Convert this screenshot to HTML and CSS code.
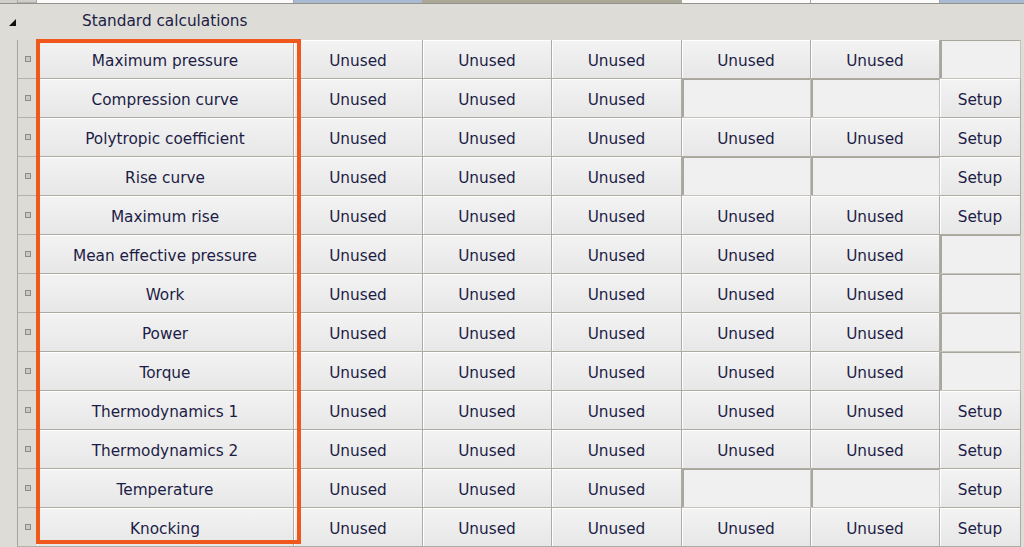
FILE: index.html
```html
<!DOCTYPE html>
<html>
<head>
    <meta charset="utf-8">
    <title>Standard calculations</title>
    <link rel="stylesheet" href="styles.css">
</head>
<body>
    <div class="grid">
        <div class="prev">
            <div class="p lead"></div>
            <div class="p gut"></div>
            <div class="p white name"></div>
            <div class="p blue c"></div>
            <div class="p tan c2"></div>
            <div class="p white c"></div>
            <div class="p white c"></div>
            <div class="p blue rest"></div>
        </div>

        <div class="group">
            <svg class="tri" width="7" height="7" viewBox="0 0 7 7"><polygon points="7,0 7,7 0,7" fill="#111"/></svg>
            <span>Standard calculations</span>
        </div>

        <div class="row">
            <div class="lead"></div><div class="gut"><i></i></div>
            <div class="cell name">Maximum pressure</div>
            <div class="cell c">Unused</div><div class="cell c">Unused</div><div class="cell c3">Unused</div>
            <div class="cell c">Unused</div><div class="cell c">Unused</div>
            <div class="empty s"></div>
        </div>
        <div class="row">
            <div class="lead"></div><div class="gut"><i></i></div>
            <div class="cell name">Compression curve</div>
            <div class="cell c">Unused</div><div class="cell c">Unused</div><div class="cell c3">Unused</div>
            <div class="empty c"></div><div class="empty c"></div>
            <div class="cell s">Setup</div>
        </div>
        <div class="row">
            <div class="lead"></div><div class="gut"><i></i></div>
            <div class="cell name">Polytropic coefficient</div>
            <div class="cell c">Unused</div><div class="cell c">Unused</div><div class="cell c3">Unused</div>
            <div class="cell c">Unused</div><div class="cell c">Unused</div>
            <div class="cell s">Setup</div>
        </div>
        <div class="row">
            <div class="lead"></div><div class="gut"><i></i></div>
            <div class="cell name">Rise curve</div>
            <div class="cell c">Unused</div><div class="cell c">Unused</div><div class="cell c3">Unused</div>
            <div class="empty c"></div><div class="empty c"></div>
            <div class="cell s">Setup</div>
        </div>
        <div class="row">
            <div class="lead"></div><div class="gut"><i></i></div>
            <div class="cell name">Maximum rise</div>
            <div class="cell c">Unused</div><div class="cell c">Unused</div><div class="cell c3">Unused</div>
            <div class="cell c">Unused</div><div class="cell c">Unused</div>
            <div class="cell s">Setup</div>
        </div>
        <div class="row">
            <div class="lead"></div><div class="gut"><i></i></div>
            <div class="cell name">Mean effective pressure</div>
            <div class="cell c">Unused</div><div class="cell c">Unused</div><div class="cell c3">Unused</div>
            <div class="cell c">Unused</div><div class="cell c">Unused</div>
            <div class="empty s"></div>
        </div>
        <div class="row">
            <div class="lead"></div><div class="gut"><i></i></div>
            <div class="cell name">Work</div>
            <div class="cell c">Unused</div><div class="cell c">Unused</div><div class="cell c3">Unused</div>
            <div class="cell c">Unused</div><div class="cell c">Unused</div>
            <div class="empty s"></div>
        </div>
        <div class="row">
            <div class="lead"></div><div class="gut"><i></i></div>
            <div class="cell name">Power</div>
            <div class="cell c">Unused</div><div class="cell c">Unused</div><div class="cell c3">Unused</div>
            <div class="cell c">Unused</div><div class="cell c">Unused</div>
            <div class="empty s"></div>
        </div>
        <div class="row">
            <div class="lead"></div><div class="gut"><i></i></div>
            <div class="cell name">Torque</div>
            <div class="cell c">Unused</div><div class="cell c">Unused</div><div class="cell c3">Unused</div>
            <div class="cell c">Unused</div><div class="cell c">Unused</div>
            <div class="empty s"></div>
        </div>
        <div class="row">
            <div class="lead"></div><div class="gut"><i></i></div>
            <div class="cell name">Thermodynamics 1</div>
            <div class="cell c">Unused</div><div class="cell c">Unused</div><div class="cell c3">Unused</div>
            <div class="cell c">Unused</div><div class="cell c">Unused</div>
            <div class="cell s">Setup</div>
        </div>
        <div class="row">
            <div class="lead"></div><div class="gut"><i></i></div>
            <div class="cell name">Thermodynamics 2</div>
            <div class="cell c">Unused</div><div class="cell c">Unused</div><div class="cell c3">Unused</div>
            <div class="cell c">Unused</div><div class="cell c">Unused</div>
            <div class="cell s">Setup</div>
        </div>
        <div class="row">
            <div class="lead"></div><div class="gut"><i></i></div>
            <div class="cell name">Temperature</div>
            <div class="cell c">Unused</div><div class="cell c">Unused</div><div class="cell c3">Unused</div>
            <div class="empty c"></div><div class="empty c"></div>
            <div class="cell s">Setup</div>
        </div>
        <div class="row">
            <div class="lead"></div><div class="gut"><i></i></div>
            <div class="cell name">Knocking</div>
            <div class="cell c">Unused</div><div class="cell c">Unused</div><div class="cell c3">Unused</div>
            <div class="cell c">Unused</div><div class="cell c">Unused</div>
            <div class="cell s">Setup</div>
        </div>

        <div class="highlight"></div>
    </div>
</body>
</html>
```

FILE: styles.css
```css
html, body {
    margin: 0;
    padding: 0;
    background: #dddcd6;
    font-family: "DejaVu Sans", Verdana, sans-serif;
    font-size: 15.3px;
    color: #1c1c46;
}

.grid {
    position: relative;
    width: 1024px;
    height: 547px;
    overflow: hidden;
}

/* bottom edge of the row above */
.prev {
    display: flex;
    height: 3px;
    border-bottom: 1px solid #93928b;
}

.prev .p {
    border-right: 1px solid #a9a8a1;
    box-sizing: border-box;
}

.prev .lead { width: 18px; background: #cfcec8; }
.prev .gut { width: 19px; background: #cfcec8; }
.prev .name { width: 257px; }
.prev .c { width: 129px; }
.prev .c2 { width: 259px; }
.prev .rest { flex: 1; border-right: none; }
.white { background: #fbfbfb; }
.blue { background: #a9bbd3; }
.tan { background: #aca897; }

.group {
    display: flex;
    align-items: center;
    height: 36px;
    padding-bottom: 3px;
    box-sizing: border-box;
    background: #dddcd6;
}

.group .tri {
    margin: 4px 0 0 9px;
}

.group span {
    margin-left: 66px;
}

.row {
    display: flex;
    height: 39px;
}

.row > div {
    box-sizing: border-box;
    height: 39px;
}

.lead {
    width: 18px;
    background: #dddcd6;
    border-right: 1px solid #a5a49e;
}

.gut {
    width: 19px;
    background: #dcdbd4;
    border-bottom: 1px solid #b2b1aa;
    display: flex;
    align-items: center;
    justify-content: center;
}

.gut i {
    display: block;
    width: 4px;
    height: 4px;
    border: 1px solid #8d8c86;
    background: #c9c8c2;
    margin-left: 1px;
}

.cell {
    display: flex;
    align-items: center;
    justify-content: center;
    padding-top: 4px;
    background: linear-gradient(#f3f3f3, #e7e7e7);
    border-right: 1px solid #aeaba2;
    border-bottom: 1px solid #aeaba2;
    box-shadow: inset 1px 1px 0 #ffffff;
    white-space: nowrap;
}

.empty {
    background: #f0f0f0;
    border-right: 1px solid #c4c2ba;
    border-bottom: 1px solid #c4c2ba;
    box-shadow: inset 2px 1px 0 #a9a69d;
}

.name { width: 257px; }
.c { width: 129px; }
.c3 { width: 130px; }
.s { width: 81px; }

.highlight {
    position: absolute;
    left: 36px;
    top: 39px;
    width: 265px;
    height: 505px;
    box-sizing: border-box;
    border: 4px solid #f0571d;
}
```
